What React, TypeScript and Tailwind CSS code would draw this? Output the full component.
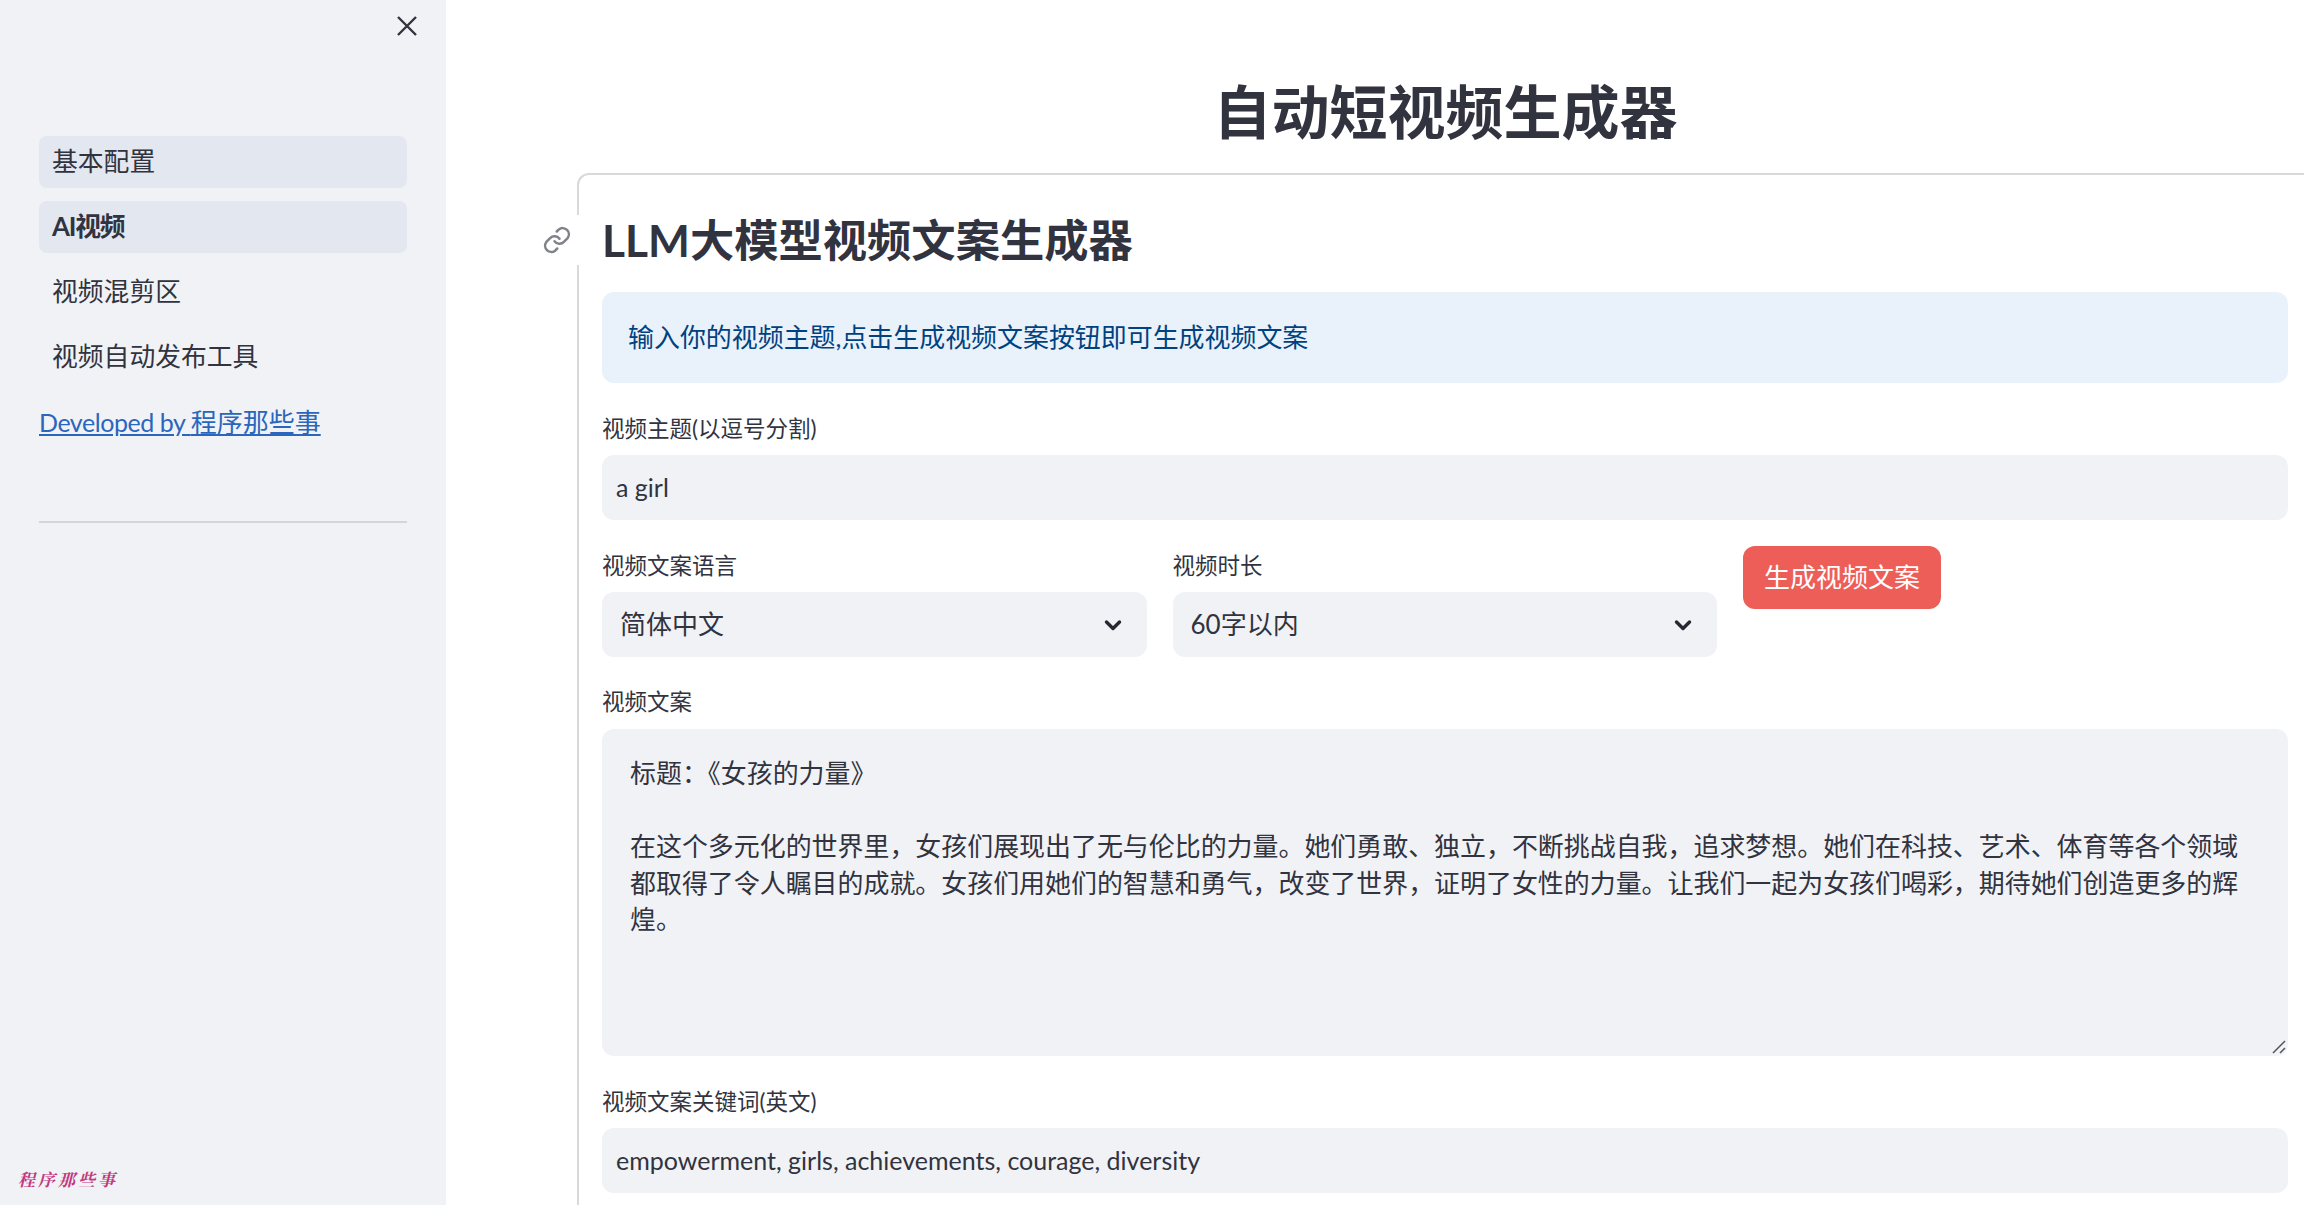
const navItems = [
  { label: '基本配置', active: true, bold: false },
  { label: 'AI视频', active: true, bold: true },
  { label: '视频混剪区', active: false, bold: false },
  { label: '视频自动发布工具', active: false, bold: false },
];

const fontStack = "font-['Lato','Noto_Sans_CJK_SC',sans-serif]";

function Chevron() {
  return (
    <svg className="mt-[1px]" width="24" height="24" viewBox="0 0 24 24" fill="none" stroke="#262730" strokeWidth="3.4" strokeLinecap="round" strokeLinejoin="round">
      <path d="M5.5 9 12 15.5 18.5 9" />
    </svg>
  );
}

function Field({ label, value, labelHeight }: { label: string; value: string; labelHeight: string }) {
  return (
    <div className="flex flex-col">
      <label className={`${labelHeight} text-[22.5px] leading-[29px] text-[#31333f]`}>{label}</label>
      <div className="flex h-[65px] items-center rounded-xl bg-[#f0f2f6] px-[14px] text-[25px] text-[#31333f]">{value}</div>
    </div>
  );
}

function SelectField({ label, value }: { label: string; value: string }) {
  return (
    <div className="flex flex-1 flex-col pt-[6px]">
      <label className="h-[40px] text-[22.5px] leading-[28px] text-[#31333f]">{label}</label>
      <div className="flex h-[65px] items-center justify-between rounded-xl bg-[#f0f2f6] pl-[18px] pr-[22px] text-[26px] text-[#31333f]">
        <span>{value}</span>
        <Chevron />
      </div>
    </div>
  );
}

export default function App() {
  return (
    <div className={`flex h-screen overflow-hidden bg-white text-[#31333f] ${fontStack}`}>
      <aside className="flex w-[446px] shrink-0 flex-col bg-[#f0f2f6] px-[39px]">
        <div className="flex h-[136px] justify-end pt-[14px]">
          <svg className="-mr-[12px]" width="24" height="24" viewBox="0 0 24 24" fill="none" stroke="#31333f" strokeWidth="2.4">
            <path d="M3 3l18 18M21 3 3 21" />
          </svg>
        </div>
        <nav className="flex flex-col gap-[13px]">
          {navItems.map((item) => (
            <div
              key={item.label}
              className={`flex h-[52px] items-center rounded-lg px-[13px] pb-[1px] text-[25.8px] ${item.active ? 'bg-[#e3e7ef]' : ''} ${item.bold ? 'font-bold tracking-[-1.2px]' : ''}`}
            >
              {item.label}
            </div>
          ))}
        </nav>
        <a className="mt-[17px] text-[26px] leading-[44px] text-[#2a66bd] underline">
          <span className="text-[25px] tracking-[-0.45px]">Developed by </span>程序那些事
        </a>
        <hr className="mt-[77px] border-t-2 border-[#d3d5da]" />
        <div className="mt-auto -ml-[21px] pb-[14px] font-['Noto_Serif_CJK_SC','Noto_Sans_CJK_SC',serif] text-[17px] font-bold italic tracking-[3px] text-[#c2397f]">
          程序那些事
        </div>
      </aside>

      <main className="flex min-w-0 flex-1 flex-col items-stretch">
        <h1 className="flex h-[173px] items-start justify-center pl-[141px] pt-[72px] text-[58px] font-bold leading-[80px] text-[#31333f]">
          自动短视频生成器
        </h1>
        <div className="relative ml-[131px] -mr-[20px] flex-1 rounded-tl-xl border-l-2 border-t-2 border-[#d9d9db] pl-[23px] pr-[36px]">
          <div className="relative mb-[19px] mt-[32px] flex items-center">
            <h2 className="text-[44.3px] font-bold leading-[66px] text-[#31333f]">LLM大模型视频文案生成器</h2>
            <div className="absolute -left-[72px] top-[8px] flex h-[50px] w-[54px] items-center justify-center bg-white">
              <svg width="30" height="30" viewBox="0 0 24 24" fill="none" stroke="#808289" strokeWidth="2" strokeLinecap="round" strokeLinejoin="round">
                <path d="M10 13a5 5 0 0 0 7.5.5l3-3a5 5 0 0 0-7-7l-1.7 1.7" />
                <path d="M14 11a5 5 0 0 0-7.5-.5l-3 3a5 5 0 0 0 7 7l1.7-1.7" />
              </svg>
            </div>
          </div>
          <div className="flex h-[91px] items-center rounded-xl bg-[#e9f1fb] px-[26px] text-[25.95px] text-[#004280]">
            输入你的视频主题,点击生成视频文案按钮即可生成视频文案
          </div>
          <div className="mt-[31px]">
            <Field label="视频主题(以逗号分割)" value="a girl" labelHeight="h-[41px]" />
          </div>
          <div className="mt-[26px] flex items-start gap-[26px]">
            <div className="flex w-[1115px] gap-[26px]">
              <SelectField label="视频文案语言" value="简体中文" />
              <SelectField label="视频时长" value="60字以内" />
            </div>
            <button className="h-[63px] w-[198px] rounded-xl bg-[#ee5e58] text-[26px] text-white">生成视频文案</button>
          </div>
          <div className="mt-[30px] flex flex-col">
            <label className="h-[42px] text-[22.5px] leading-[29px] text-[#31333f]">视频文案</label>
            <div className="relative h-[327px] rounded-xl bg-[#f0f2f6] px-[28px] pt-[26px] text-[25.95px] leading-[36.5px]">
              <p>标题：《女孩的力量》</p>
              <p>&nbsp;</p>
              <p>在这个多元化的世界里，女孩们展现出了无与伦比的力量。她们勇敢、独立，不断挑战自我，追求梦想。她们在科技、艺术、体育等各个领域都取得了令人瞩目的成就。女孩们用她们的智慧和勇气，改变了世界，证明了女性的力量。让我们一起为女孩们喝彩，期待她们创造更多的辉煌。</p>
              <svg className="absolute bottom-[2px] right-[2px]" width="16" height="16" viewBox="0 0 16 16" stroke="#555" strokeWidth="1.5">
                <path d="M3 15 15 3M10 15l5-5" />
              </svg>
            </div>
          </div>
          <div className="mt-[31px]">
            <Field label="视频文案关键词(英文)" value="empowerment, girls, achievements, courage, diversity" labelHeight="h-[41px]" />
          </div>
        </div>
      </main>
    </div>
  );
}
